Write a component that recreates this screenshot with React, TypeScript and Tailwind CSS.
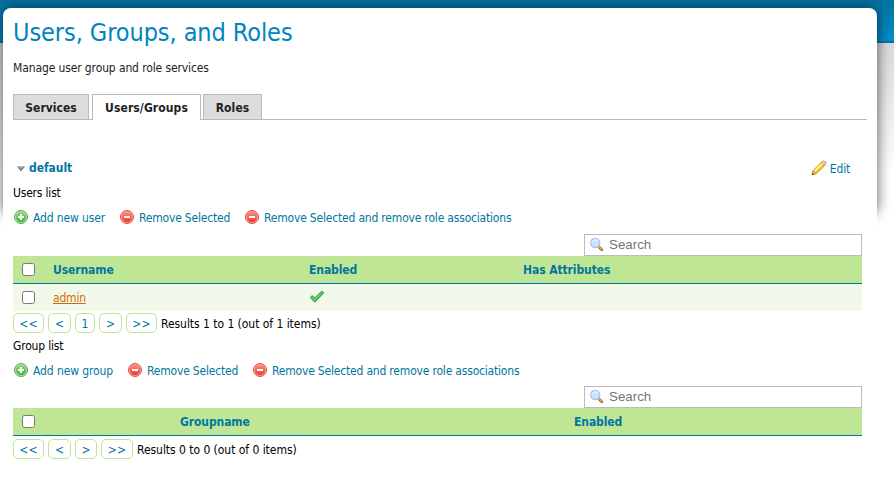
import React from "react";

function AddIcon() {
  return (
    <svg width="16" height="16" viewBox="0 0 16 16" className="shrink-0">
      <defs>
        <linearGradient id="addFill" x1="0" y1="0" x2="0" y2="1">
          <stop offset="0" stopColor="#8fdb7c" />
          <stop offset="1" stopColor="#3fb33a" />
        </linearGradient>
      </defs>
      <circle cx="8" cy="8" r="6.5" fill="#b5e8a8" stroke="#55a853" />
      <circle cx="8" cy="8" r="5.2" fill="url(#addFill)" />
      <path d="M7 5h2v2h2v2H9v2H7V9H5V7h2z" fill="#fff" />
    </svg>
  );
}

function RemoveIcon() {
  return (
    <svg width="16" height="16" viewBox="0 0 16 16" className="shrink-0">
      <defs>
        <linearGradient id="removeFill" x1="0" y1="0" x2="0" y2="1">
          <stop offset="0" stopColor="#ff8a7c" />
          <stop offset="1" stopColor="#ee3a30" />
        </linearGradient>
      </defs>
      <circle cx="8" cy="8" r="6.5" fill="#ffa298" stroke="#d9544b" />
      <circle cx="8" cy="8" r="5.2" fill="url(#removeFill)" />
      <path d="M5 7h6v2H5z" fill="#fff" />
    </svg>
  );
}

function PencilIcon() {
  return (
    <svg width="16" height="16" viewBox="0 0 16 16" className="shrink-0">
      <path d="M1 14.5 2 10.5 10.5 2 12.5 1 14.5 1.7 15 4 13.8 5.6 5.4 13.8z" fill="#f9d83c" stroke="#c08e25" strokeWidth="0.8" />
      <path d="M3.6 11.2 11.3 3.6" stroke="#fff29a" strokeWidth="1.6" />
      <path d="M5.2 12.8 12.9 5.2" stroke="#e3af1a" strokeWidth="1.1" />
      <path d="M10.4 2.4 12.5 1.3 14.3 2 14.6 4 13.5 5.4z" fill="#f6d0b0" stroke="#c99064" strokeWidth="0.6" />
      <path d="M1.1 14.4 2.1 10.9 5 13.6z" fill="#e3b078" stroke="#9a672c" strokeWidth="0.5" />
      <path d="M1 13.2V15h1.8z" fill="#5a3b14" />
    </svg>
  );
}

function SearchIcon() {
  return (
    <svg width="16" height="16" viewBox="0 0 16 16" className="shrink-0">
      <path d="m9.5 9.5 3.3 3.3" stroke="#a9652c" strokeWidth="2.8" strokeLinecap="round" />
      <path d="m10.1 9.9 2.5 2.5" stroke="#f0b06a" strokeWidth="1.3" strokeLinecap="round" />
      <circle cx="6.2" cy="6" r="4.6" fill="#c6e1fb" stroke="#a3c3ee" strokeWidth="1.2" />
      <path d="M3.2 5.6a3 3 0 0 1 5.5-1.2" fill="none" stroke="#e8f4ff" strokeWidth="1.3" />
    </svg>
  );
}

function TickIcon() {
  return (
    <svg width="16" height="16" viewBox="0 0 16 16" className="relative -top-px shrink-0">
      <path d="M1.2 8.4 3.3 6.5 5.7 8.9 12.8 2 14.8 4 5.8 13.3z" fill="#46bf5c" stroke="#2f9145" strokeWidth="0.8" strokeLinejoin="round" />
      <path d="M2.4 8.3 5.7 10.9 12.8 3.6" fill="none" stroke="#7fdd8e" strokeWidth="0.9" />
    </svg>
  );
}

function Checkbox() {
  return <input type="checkbox" className="m-0 block h-[13px] w-[13px] shrink-0" />;
}

function ActionLink({ icon, label, className }: { icon: React.ReactNode; label: string; className: string }) {
  return (
    <a className={`flex shrink-0 items-center gap-1 text-[#0076a1] ${className}`}>
      {icon}
      <span className="pt-0.5">{label}</span>
    </a>
  );
}

function SearchBox() {
  return (
    <div className="ml-auto flex h-[22px] w-[278px] items-center gap-1 border border-[#bbb] bg-white pl-1 font-['Liberation_Sans',Arial,sans-serif] text-[13.33px] tracking-normal text-[#757575]">
      <SearchIcon />
      <span>Search</span>
    </div>
  );
}

function PageButton({ label, className }: { label: string; className: string }) {
  return (
    <button className={`flex h-5 shrink-0 items-center justify-center rounded-[5px] border border-[#bfe695] bg-white pt-px tracking-[0.1px] text-[#0076a1] ${className}`}>
      {label}
    </button>
  );
}

export default function App() {
  return (
    <div className="relative isolate h-[493px] w-[894px] overflow-hidden bg-white pl-[3px] pt-2 font-['DejaVu_Sans_Condensed','DejaVu_Sans',sans-serif] text-[12px] font-stretch-condensed leading-4 tracking-[-0.19px] text-black">
      <div className="absolute inset-x-0 top-0 -z-10 h-[43px] border-b-2 border-[#0075a8] bg-linear-to-b from-[#0071a0] to-[#008fcd]" />
      <div className="absolute inset-x-0 top-[43px] -z-10 h-[130px] bg-linear-to-b from-[#d9d9d9] to-white" />
      <div className="absolute left-[3px] top-2 -z-10 h-[205px] w-[874px] rounded-[9px] shadow-[0_1px_14px_rgba(0,0,0,0.65)]" />

      <main className="h-[485px] w-[874px] rounded-t-[8px] bg-white pl-[10px]">
        <h1 className="flex h-[50px] items-center whitespace-nowrap text-[25px] leading-8 tracking-[-0.07px] text-[#0083bf]">Users, Groups, and Roles</h1>
        <p className="flex h-5 items-center tracking-[-0.12px] text-[#222]">Manage user group and role services</p>

        <nav className="mt-4 flex h-[26px] w-[854px] items-end gap-[3px] font-bold tracking-[0.1px] text-[#222] shadow-[inset_0_-1px_0_#bbb]">
          <div className="flex h-[26px] w-[76px] items-center justify-center border border-[#bbb] bg-[#ddd] pt-px tracking-[0px]">Services</div>
          <div className="flex h-[26px] w-[109px] items-center justify-center border border-b-0 border-[#bbb] bg-white">Users/Groups</div>
          <div className="-ml-px flex h-[26px] w-[59px] items-center justify-center border border-[#bbb] bg-[#ddd] pt-px">Roles</div>
        </nav>

        <section className="w-[849px]">
          <div className="mt-[38px] flex h-5 items-center text-[#0076a1]">
            <svg width="8" height="6" viewBox="0 0 8 6" className="ml-1 mt-px shrink-0">
              <path d="M0 .5h8L4 5.5z" fill="#777" />
              <path d="M1.5 1h5L4 3z" fill="#aaa" />
            </svg>
            <h2 className="ml-1 font-bold tracking-[-0.06px]">default</h2>
            <a className="ml-auto mr-3 flex items-center gap-[3px]">
              <PencilIcon />
              <span className="pt-0.5">Edit</span>
            </a>
          </div>

          <p className="mt-[7px] h-4">Users list</p>
          <div className="mt-2 flex h-4 items-center whitespace-nowrap">
            <ActionLink icon={<AddIcon />} label="Add new user" className="w-[106px] tracking-[-0.12px]" />
            <ActionLink icon={<RemoveIcon />} label="Remove Selected" className="w-[125px]" />
            <ActionLink icon={<RemoveIcon />} label="Remove Selected and remove role associations" className="w-[270px]" />
          </div>
          <div className="mt-[9px]">
            <SearchBox />
          </div>
          <div className="flex h-7 items-center border-b border-[#0076a1] bg-[#bfe695] pl-[9px] font-bold tracking-[-0.09px] text-[#0076a1]">
            <Checkbox />
            <span className="ml-[18px] w-[256px]">Username</span>
            <span className="w-[214px]">Enabled</span>
            <span>Has Attributes</span>
          </div>
          <div className="flex h-[27px] items-center bg-[#f2f9ea] pl-[9px]">
            <Checkbox />
            <a className="ml-[18px] w-[256px] text-[#d66a00] underline">admin</a>
            <TickIcon />
          </div>
          <div className="mt-[2px] flex h-5 items-center gap-1 whitespace-nowrap">
            <PageButton label="<<" className="w-[31px]" />
            <PageButton label="<" className="w-[23px]" />
            <PageButton label="1" className="w-5" />
            <PageButton label=">" className="w-[23px]" />
            <PageButton label=">>" className="w-[31px]" />
            <span className="pt-0.5 tracking-[-0.04px]">Results 1 to 1 (out of 1 items)</span>
          </div>

          <p className="mt-[5px] h-4">Group list</p>
          <div className="mt-2 flex h-4 items-center whitespace-nowrap">
            <ActionLink icon={<AddIcon />} label="Add new group" className="w-[114px] tracking-[-0.1px]" />
            <ActionLink icon={<RemoveIcon />} label="Remove Selected" className="w-[125px]" />
            <ActionLink icon={<RemoveIcon />} label="Remove Selected and remove role associations" className="w-[270px]" />
          </div>
          <div className="mt-2">
            <SearchBox />
          </div>
          <div className="flex h-7 items-center border-b border-[#0076a1] bg-[#bfe695] pl-[9px] font-bold tracking-[-0.09px] text-[#0076a1]">
            <Checkbox />
            <span className="ml-[145px] w-[394px] pt-px">Groupname</span>
            <span className="pt-px">Enabled</span>
          </div>
          <div className="mt-[3px] flex h-5 items-center gap-1 whitespace-nowrap">
            <PageButton label="<<" className="w-[31px]" />
            <PageButton label="<" className="w-[23px]" />
            <PageButton label=">" className="w-[22px]" />
            <PageButton label=">>" className="w-8" />
            <span className="pt-0.5 tracking-[-0.04px]">Results 0 to 0 (out of 0 items)</span>
          </div>
        </section>
      </main>
    </div>
  );
}
